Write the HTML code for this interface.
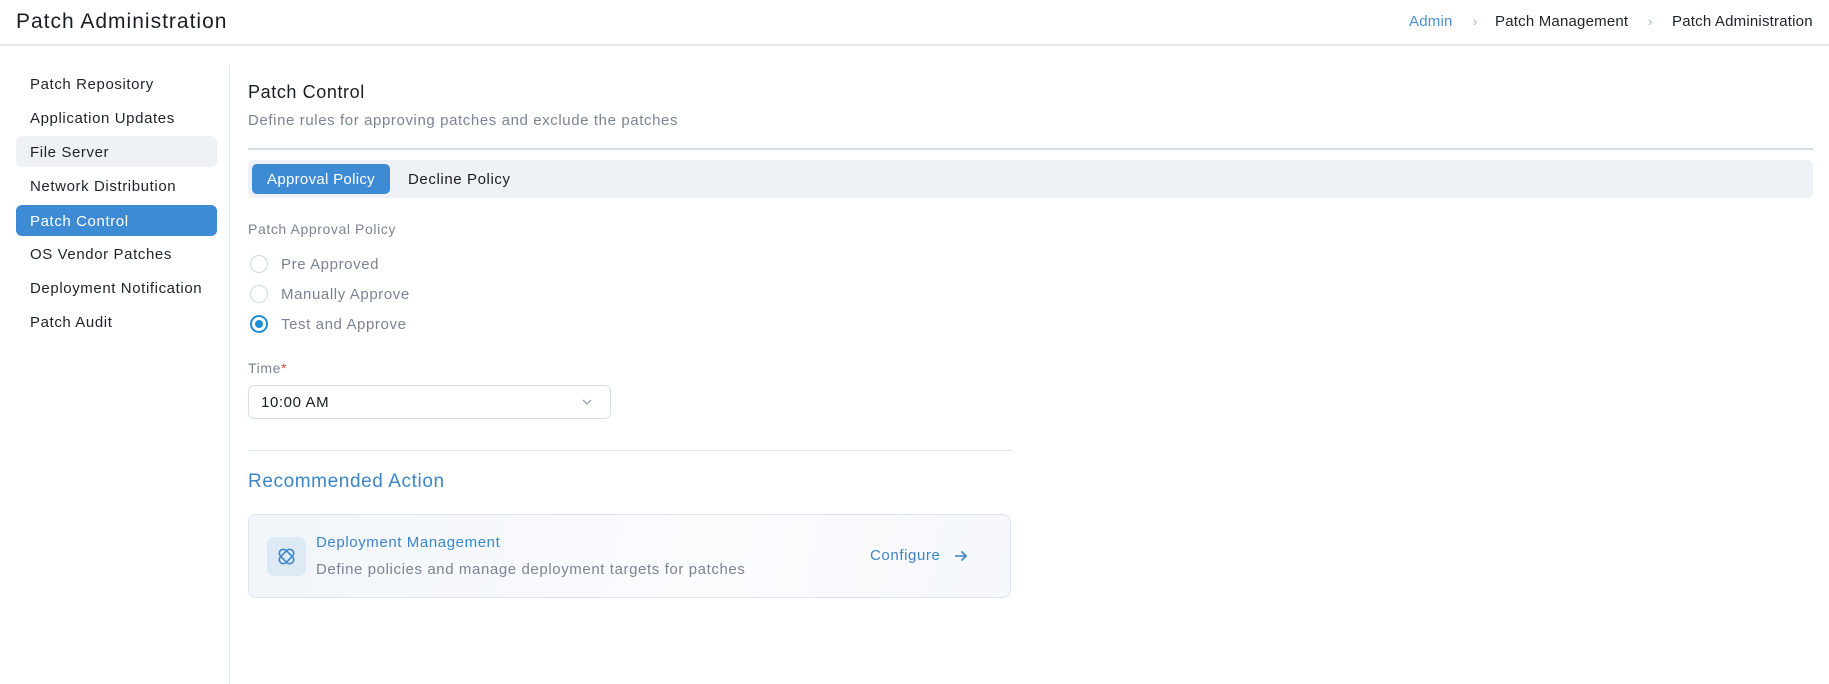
<!DOCTYPE html>
<html><head><meta charset="utf-8"><style>
*{box-sizing:border-box;margin:0;padding:0}
body{width:1829px;height:684px;overflow:hidden;background:#fff;font-family:"Liberation Sans",sans-serif;color:#1f2329;position:relative;letter-spacing:0.6px}
.a{position:absolute;white-space:nowrap}
.hdr{left:0;top:0;width:1829px;height:46px;border-bottom:2px solid #e3e7ee}
.side{left:16px;width:201px;height:31px;border-radius:6px;padding-left:14px;line-height:33px;font-size:15px}
.radio{width:18px;height:18px;border-radius:50%;border:1.5px solid #d3d8df;left:250px}
.bc{font-size:15px;top:13px;letter-spacing:0.2px}
</style></head><body>
<div class="a hdr"></div>
<div class="a" style="left:16px;top:10px;font-size:21px;color:#1a1d21;letter-spacing:1px">Patch Administration</div>
<div class="a bc" style="left:1409px;color:#4a8fd6">Admin</div>
<div class="a" style="left:1473px;top:14px;font-size:13px;color:#a7b0bd">›</div>
<div class="a bc" style="left:1495px">Patch Management</div>
<div class="a" style="left:1648px;top:14px;font-size:13px;color:#a7b0bd">›</div>
<div class="a bc" style="left:1672px">Patch Administration</div>

<div class="a side" style="top:68px">Patch Repository</div>
<div class="a side" style="top:102px">Application Updates</div>
<div class="a side" style="top:136px;background:#eef1f5">File Server</div>
<div class="a side" style="top:170px">Network Distribution</div>
<div class="a side" style="top:205px;background:#3d8bd4;color:#fff">Patch Control</div>
<div class="a side" style="top:238px">OS Vendor Patches</div>
<div class="a side" style="top:272px">Deployment Notification</div>
<div class="a side" style="top:306px">Patch Audit</div>
<div class="a" style="left:229px;top:65px;width:1px;height:619px;background:#e3e7ee"></div>

<div class="a" style="left:248px;top:82px;font-size:18px;color:#1a1d21">Patch Control</div>
<div class="a" style="left:248px;top:112px;font-size:15px;color:#7b8494">Define rules for approving patches and exclude the patches</div>
<div class="a" style="left:248px;top:148px;width:1565px;height:2px;background:#d8dee8"></div>
<div class="a" style="left:248px;top:160px;width:1565px;height:38px;background:#eef1f5;border-radius:6px"></div>
<div class="a" style="left:252px;top:164px;width:138px;height:30px;background:#3d8bd4;border-radius:5px;color:#fff;font-size:15px;line-height:32px;text-align:center;letter-spacing:0.3px">Approval Policy</div>
<div class="a" style="left:408px;top:171px;font-size:15px;color:#1a1d21">Decline Policy</div>

<div class="a" style="left:248px;top:221px;font-size:14px;color:#7b8494">Patch Approval Policy</div>
<div class="a radio" style="top:255px"></div>
<div class="a" style="left:281px;top:256px;font-size:15px;color:#7b8494">Pre Approved</div>
<div class="a radio" style="top:285px"></div>
<div class="a" style="left:281px;top:286px;font-size:15px;color:#7b8494">Manually Approve</div>
<div class="a radio" style="top:315px;border:2px solid #1d8fd6"><div style="width:8px;height:8px;border-radius:50%;background:#1d8fd6;margin:3px"></div></div>
<div class="a" style="left:281px;top:316px;font-size:15px;color:#7b8494">Test and Approve</div>

<div class="a" style="left:248px;top:360px;font-size:14px;color:#7b8494">Time<span style="color:#e0463c">*</span></div>
<div class="a" style="left:248px;top:385px;width:363px;height:34px;border:1px solid #d8dee6;border-radius:6px"></div>
<div class="a" style="left:261px;top:394px;font-size:15px;color:#1a1d21">10:00 AM</div>
<svg class="a" style="left:581px;top:397px" width="12" height="10" viewBox="0 0 12 10"><path d="M2 3l4 4 4-4" fill="none" stroke="#9aa3ae" stroke-width="1.3"/></svg>

<div class="a" style="left:248px;top:450px;width:763px;height:1px;background:#dde2ea"></div>
<div class="a" style="left:248px;top:471px;font-size:19px;color:#3d85c6">Recommended Action</div>
<div class="a" style="left:248px;top:514px;width:763px;height:84px;border:1px solid #dde3ec;border-radius:8px;background:linear-gradient(100deg,#f1f5fa,#fbfcfe 60%,#f5f8fb)"></div>
<div class="a" style="left:267px;top:537px;width:39px;height:39px;border-radius:7px;background:#dde9f5"></div>
<svg class="a" style="left:276px;top:546px" width="21" height="21" viewBox="0 0 21 21" fill="none" stroke="#3d85c6" stroke-width="1.6"><rect x="6.5" y="2" width="8" height="17" rx="4" transform="rotate(45 10.5 10.5)"/><rect x="6.5" y="2" width="8" height="17" rx="4" transform="rotate(-45 10.5 10.5)"/></svg>
<div class="a" style="left:316px;top:534px;font-size:15px;color:#3d85c6">Deployment Management</div>
<div class="a" style="left:316px;top:561px;font-size:15px;color:#7b8494">Define policies and manage deployment targets for patches</div>
<div class="a" style="left:870px;top:547px;font-size:15px;color:#3d85c6">Configure</div>
<svg class="a" style="left:953px;top:549px" width="16" height="14" viewBox="0 0 16 14"><path d="M2 7h11M8.5 2.5L13 7l-4.5 4.5" fill="none" stroke="#3d85c6" stroke-width="1.6"/></svg>
</body></html>
